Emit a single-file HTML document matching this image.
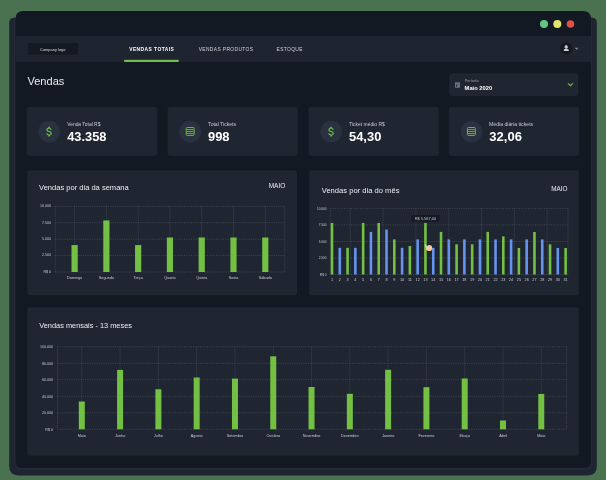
<!DOCTYPE html>
<html><head><meta charset="utf-8"><style>
html,body{margin:0;padding:0;width:606px;height:480px;overflow:hidden;background:#4a7250;}
svg{display:block;font-family:"Liberation Sans", sans-serif;will-change:transform;}
</style></head><body>
<svg width="606" height="480" viewBox="0 0 606 480">
<rect x="0.00" y="0.00" width="606.00" height="480.00" rx="0" fill="#4a7250" />
<path d="M14.5,17.8 H591.9 Q596.8,17.8 596.8,22.7 V466.5 Q596.8,475.4 587.9,475.4 H18.4 Q9.2,475.4 9.2,466.3 V23 Q9.2,17.8 14.5,17.8 Z" fill="#1e2430"/>
<path d="M14,17.8 H592.3 V462 Q592.3,470 584.3,470 H22 Q14,470 14,462 Z" fill="#232935"/>
<path d="M23.3,11 H583 Q591,11 591,19 V461 Q591,468 584,468 H22.5 Q15.5,468 15.5,461 V18.8 Q15.5,11 23.3,11 Z" fill="#121923"/>
<rect x="15.50" y="36.00" width="575.50" height="26.10" rx="0" fill="#1e2430" />
<circle cx="544.00" cy="24.00" r="4.00" fill="#5fc785"/>
<circle cx="557.30" cy="24.00" r="4.00" fill="#e6e36c"/>
<circle cx="570.50" cy="24.00" r="3.80" fill="#e05244"/>
<rect x="28.00" y="43.00" width="50.00" height="11.70" rx="0" fill="#141a24" />
<text x="40.10" y="50.50" font-size="4.2" fill="#dadde2" font-weight="400" textLength="25.27" lengthAdjust="spacingAndGlyphs" >Company logo</text>
<text x="129.18" y="51.00" font-size="4.9" fill="#ffffff" font-weight="700" textLength="44.69" lengthAdjust="spacing" >VENDAS TOTAIS</text>
<rect x="124.20" y="59.80" width="54.50" height="2.20" rx="0" fill="#6cc04a" />
<text x="198.68" y="51.10" font-size="4.9" fill="#d2d5da" font-weight="400" textLength="54.37" lengthAdjust="spacing" >VENDAS PRODUTOS</text>
<text x="276.51" y="51.10" font-size="4.9" fill="#d2d5da" font-weight="400" textLength="26.00" lengthAdjust="spacing" >ESTOQUE</text>
<circle cx="566.20" cy="48.40" r="6.00" fill="#131821"/>
<path d="M566.2,45 L567.7,45.9 V48 L566.9,48.8 H565.5 L564.7,48 V45.9 Z" fill="#c9ccd1"/>
<path d="M563.7,51 V49.7 L564.9,49 H567.5 L568.8,49.7 V51 Z" fill="#c9ccd1"/>
<path d="M574.8,47.8 L578.6,47.8 L576.7,50.1 Z" fill="#7d838c"/>
<text x="27.44" y="85.00" font-size="11.5" fill="#e9ebee" font-weight="400" textLength="36.96" lengthAdjust="spacingAndGlyphs" >Vendas</text>
<rect x="449.90" y="73.90" width="127.70" height="21.40" rx="1.5" fill="#1f2531" stroke="#262c38" stroke-width="0.8"/>
<rect x="455.00" y="82.60" width="5.00" height="5.15" rx="0.5" fill="#6d727c" />
<rect x="455.60" y="81.75" width="0.90" height="1.25" rx="0" fill="#6d727c" />
<rect x="458.50" y="81.75" width="0.90" height="1.25" rx="0" fill="#6d727c" />
<rect x="456.10" y="84.60" width="1.00" height="2.10" rx="0" fill="#1f2531" />
<rect x="457.60" y="83.90" width="1.60" height="0.50" rx="0" fill="#1f2531" />
<text x="464.68" y="81.80" font-size="3.6" fill="#9aa0a8" font-weight="400" textLength="13.99" lengthAdjust="spacingAndGlyphs" >Período</text>
<text x="464.63" y="89.90" font-size="5.4" fill="#ffffff" font-weight="700" textLength="27.51" lengthAdjust="spacingAndGlyphs" >Maio 2020</text>
<path d="M568.3,83.6 L570.4,85.7 L572.6,83.6" fill="none" stroke="#62b043" stroke-width="1.3" stroke-linecap="round" stroke-linejoin="round"/>
<rect x="27.00" y="107.30" width="130.00" height="48.20" rx="2" fill="#1f2531" stroke="#232a37" stroke-width="0.6"/>
<circle cx="49.20" cy="131.60" r="10.80" fill="#2a3242"/>
<path d="M11.8 10.9c-2.27-.59-3-1.2-3-2.150 0-1.09 1.01-1.85 2.7-1.85 1.78 0 2.44.85 2.5 2.1h2.21c-.07-1.72-1.12-3.3-3.21-3.81V3h-3v2.16c-1.94.42-3.5 1.68-3.5 3.61 0 2.31 1.91 3.46 4.7 4.13 2.5.6 3 1.48 3 2.410 0 .69-.49 1.79-2.7 1.79-2.06 0-2.870-.92-2.98-2.1h-2.2c.12 2.19 1.76 3.42 3.68 3.83V21h3v-2.15c1.95-.37 3.5-1.5 3.5-3.55 0-2.84-2.43-3.81-4.7-4.4z" fill="#6cc04a" transform="translate(42.81,125.06) scale(0.545)"/>
<text x="67.18" y="126.30" font-size="5.1" fill="#c9ccd2" font-weight="400" textLength="33.20" lengthAdjust="spacingAndGlyphs" >Venda Total R$</text>
<text x="67.21" y="140.90" font-size="12" fill="#ffffff" font-weight="700" textLength="39.26" lengthAdjust="spacingAndGlyphs" >43.358</text>
<rect x="168.00" y="107.30" width="129.30" height="48.20" rx="2" fill="#1f2531" stroke="#232a37" stroke-width="0.6"/>
<circle cx="190.20" cy="131.60" r="10.80" fill="#2a3242"/>
<rect x="186.25" y="127.50" width="7.90" height="7.90" rx="1.0" fill="#27332d" stroke="#6cc04a" stroke-width="0.95"/>
<rect x="186.90" y="129.18" width="6.60" height="0.84" rx="0" fill="#6cc04a" />
<rect x="186.90" y="131.08" width="6.60" height="0.84" rx="0" fill="#6cc04a" />
<rect x="186.90" y="132.98" width="6.60" height="0.84" rx="0" fill="#6cc04a" />
<text x="208.10" y="126.30" font-size="5.1" fill="#c9ccd2" font-weight="400" textLength="27.89" lengthAdjust="spacingAndGlyphs" >Total Tickets</text>
<text x="207.95" y="140.90" font-size="12" fill="#ffffff" font-weight="700" textLength="21.59" lengthAdjust="spacingAndGlyphs" >998</text>
<rect x="309.00" y="107.30" width="129.40" height="48.20" rx="2" fill="#1f2531" stroke="#232a37" stroke-width="0.6"/>
<circle cx="331.20" cy="131.60" r="10.80" fill="#2a3242"/>
<path d="M11.8 10.9c-2.27-.59-3-1.2-3-2.150 0-1.09 1.01-1.85 2.7-1.85 1.78 0 2.44.85 2.5 2.1h2.21c-.07-1.72-1.12-3.3-3.21-3.81V3h-3v2.16c-1.94.42-3.5 1.68-3.5 3.61 0 2.31 1.91 3.46 4.7 4.13 2.5.6 3 1.48 3 2.410 0 .69-.49 1.79-2.7 1.79-2.06 0-2.870-.92-2.98-2.1h-2.2c.12 2.19 1.76 3.42 3.68 3.83V21h3v-2.15c1.95-.37 3.5-1.5 3.5-3.55 0-2.84-2.43-3.81-4.7-4.4z" fill="#6cc04a" transform="translate(324.81,125.06) scale(0.545)"/>
<text x="349.10" y="126.30" font-size="5.1" fill="#c9ccd2" font-weight="400" textLength="35.69" lengthAdjust="spacingAndGlyphs" >Ticket médio R$</text>
<text x="349.01" y="140.90" font-size="12" fill="#ffffff" font-weight="700" textLength="32.34" lengthAdjust="spacingAndGlyphs" >54,30</text>
<rect x="449.20" y="107.30" width="129.60" height="48.20" rx="2" fill="#1f2531" stroke="#232a37" stroke-width="0.6"/>
<circle cx="471.40" cy="131.60" r="10.80" fill="#2a3242"/>
<rect x="467.45" y="127.50" width="7.90" height="7.90" rx="1.0" fill="#27332d" stroke="#6cc04a" stroke-width="0.95"/>
<rect x="468.10" y="129.18" width="6.60" height="0.84" rx="0" fill="#6cc04a" />
<rect x="468.10" y="131.08" width="6.60" height="0.84" rx="0" fill="#6cc04a" />
<rect x="468.10" y="132.98" width="6.60" height="0.84" rx="0" fill="#6cc04a" />
<text x="488.99" y="126.30" font-size="5.1" fill="#c9ccd2" font-weight="400" textLength="44.19" lengthAdjust="spacingAndGlyphs" >Média diária tickets</text>
<text x="489.27" y="140.90" font-size="12" fill="#ffffff" font-weight="700" textLength="32.61" lengthAdjust="spacingAndGlyphs" >32,06</text>
<rect x="27.50" y="170.30" width="269.50" height="124.90" rx="2.5" fill="#1f2531" />
<rect x="309.20" y="170.30" width="269.70" height="124.90" rx="2.5" fill="#1f2531" />
<rect x="27.30" y="307.30" width="551.60" height="148.40" rx="2.5" fill="#1f2531" />
<text x="39.06" y="189.90" font-size="7.8" fill="#eceef1" font-weight="400" textLength="89.66" lengthAdjust="spacingAndGlyphs" >Vendas por dia da semana</text>
<text x="268.68" y="187.90" font-size="6.8" fill="#eceef1" font-weight="400" textLength="16.62" lengthAdjust="spacingAndGlyphs" >MAIO</text>
<text x="321.76" y="192.70" font-size="7.8" fill="#eceef1" font-weight="400" textLength="77.70" lengthAdjust="spacingAndGlyphs" >Vendas por dia do mês</text>
<text x="551.29" y="190.60" font-size="6.8" fill="#eceef1" font-weight="400" textLength="16.30" lengthAdjust="spacingAndGlyphs" >MAIO</text>
<text x="39.26" y="327.70" font-size="7.8" fill="#eceef1" font-weight="400" textLength="92.71" lengthAdjust="spacingAndGlyphs" >Vendas mensais - 13 meses</text>
<line x1="55.2" y1="206.3" x2="284.8" y2="206.3" stroke="#4b525a" stroke-width="0.8" stroke-dasharray="1 1.3"/>
<line x1="55.2" y1="222.72500000000002" x2="284.8" y2="222.72500000000002" stroke="#4b525a" stroke-width="0.8" stroke-dasharray="1 1.3"/>
<line x1="55.2" y1="239.15" x2="284.8" y2="239.15" stroke="#4b525a" stroke-width="0.8" stroke-dasharray="1 1.3"/>
<line x1="55.2" y1="255.575" x2="284.8" y2="255.575" stroke="#4b525a" stroke-width="0.8" stroke-dasharray="1 1.3"/>
<line x1="55.2" y1="272.0" x2="284.8" y2="272.0" stroke="#4b525a" stroke-width="0.8" stroke-dasharray="1 1.3"/>
<line x1="55.2" y1="206.3" x2="55.2" y2="272.0" stroke="#4b525a" stroke-width="0.8" stroke-dasharray="1 1.3"/>
<line x1="74.6" y1="206.3" x2="74.6" y2="272.0" stroke="#4b525a" stroke-width="0.8" stroke-dasharray="1 1.3"/>
<line x1="106.38" y1="206.3" x2="106.38" y2="272.0" stroke="#4b525a" stroke-width="0.8" stroke-dasharray="1 1.3"/>
<line x1="138.16" y1="206.3" x2="138.16" y2="272.0" stroke="#4b525a" stroke-width="0.8" stroke-dasharray="1 1.3"/>
<line x1="169.94" y1="206.3" x2="169.94" y2="272.0" stroke="#4b525a" stroke-width="0.8" stroke-dasharray="1 1.3"/>
<line x1="201.72" y1="206.3" x2="201.72" y2="272.0" stroke="#4b525a" stroke-width="0.8" stroke-dasharray="1 1.3"/>
<line x1="233.5" y1="206.3" x2="233.5" y2="272.0" stroke="#4b525a" stroke-width="0.8" stroke-dasharray="1 1.3"/>
<line x1="265.28" y1="206.3" x2="265.28" y2="272.0" stroke="#4b525a" stroke-width="0.8" stroke-dasharray="1 1.3"/>
<line x1="284.8" y1="206.3" x2="284.8" y2="272.0" stroke="#4b525a" stroke-width="0.8" stroke-dasharray="1 1.3"/>
<text x="51.00" y="207.10" font-size="3.6" fill="#c9ccd2" font-weight="400" text-anchor="end" letter-spacing="0" >10.000</text>
<text x="51.00" y="223.53" font-size="3.6" fill="#c9ccd2" font-weight="400" text-anchor="end" letter-spacing="0" >7.500</text>
<text x="51.00" y="239.95" font-size="3.6" fill="#c9ccd2" font-weight="400" text-anchor="end" letter-spacing="0" >5.000</text>
<text x="51.00" y="256.38" font-size="3.6" fill="#c9ccd2" font-weight="400" text-anchor="end" letter-spacing="0" >2.500</text>
<text x="51.00" y="272.80" font-size="3.6" fill="#c9ccd2" font-weight="400" text-anchor="end" letter-spacing="0" >R$ 0</text>
<rect x="71.50" y="245.06" width="6.20" height="26.94" rx="0" fill="#74c043" />
<text x="74.60" y="278.90" font-size="3.8" fill="#c9ccd2" font-weight="400" text-anchor="middle" letter-spacing="0" >Domingo</text>
<rect x="103.28" y="220.43" width="6.20" height="51.57" rx="0" fill="#74c043" />
<text x="106.38" y="278.90" font-size="3.8" fill="#c9ccd2" font-weight="400" text-anchor="middle" letter-spacing="0" >Segunda</text>
<rect x="135.06" y="245.06" width="6.20" height="26.94" rx="0" fill="#74c043" />
<text x="138.16" y="278.90" font-size="3.8" fill="#c9ccd2" font-weight="400" text-anchor="middle" letter-spacing="0" >Terça</text>
<rect x="166.84" y="237.51" width="6.20" height="34.49" rx="0" fill="#74c043" />
<text x="169.94" y="278.90" font-size="3.8" fill="#c9ccd2" font-weight="400" text-anchor="middle" letter-spacing="0" >Quarta</text>
<rect x="198.62" y="237.51" width="6.20" height="34.49" rx="0" fill="#74c043" />
<text x="201.72" y="278.90" font-size="3.8" fill="#c9ccd2" font-weight="400" text-anchor="middle" letter-spacing="0" >Quinta</text>
<rect x="230.40" y="237.51" width="6.20" height="34.49" rx="0" fill="#74c043" />
<text x="233.50" y="278.90" font-size="3.8" fill="#c9ccd2" font-weight="400" text-anchor="middle" letter-spacing="0" >Sexta</text>
<rect x="262.18" y="237.51" width="6.20" height="34.49" rx="0" fill="#74c043" />
<text x="265.28" y="278.90" font-size="3.8" fill="#c9ccd2" font-weight="400" text-anchor="middle" letter-spacing="0" >Sábado</text>
<line x1="330.3" y1="208.4" x2="568" y2="208.4" stroke="#4b525a" stroke-width="0.8" stroke-dasharray="1 1.3"/>
<line x1="330.3" y1="224.925" x2="568" y2="224.925" stroke="#4b525a" stroke-width="0.8" stroke-dasharray="1 1.3"/>
<line x1="330.3" y1="241.45" x2="568" y2="241.45" stroke="#4b525a" stroke-width="0.8" stroke-dasharray="1 1.3"/>
<line x1="330.3" y1="257.975" x2="568" y2="257.975" stroke="#4b525a" stroke-width="0.8" stroke-dasharray="1 1.3"/>
<line x1="330.3" y1="274.5" x2="568" y2="274.5" stroke="#4b525a" stroke-width="0.8" stroke-dasharray="1 1.3"/>
<line x1="330.3" y1="208.4" x2="330.3" y2="274.5" stroke="#4b525a" stroke-width="0.8" stroke-dasharray="1 1.3"/>
<line x1="350.3" y1="208.4" x2="350.3" y2="274.5" stroke="#4b525a" stroke-width="0.8" stroke-dasharray="1 1.3"/>
<line x1="383.1" y1="208.4" x2="383.1" y2="274.5" stroke="#4b525a" stroke-width="0.8" stroke-dasharray="1 1.3"/>
<line x1="415.9" y1="208.4" x2="415.9" y2="274.5" stroke="#4b525a" stroke-width="0.8" stroke-dasharray="1 1.3"/>
<line x1="448.7" y1="208.4" x2="448.7" y2="274.5" stroke="#4b525a" stroke-width="0.8" stroke-dasharray="1 1.3"/>
<line x1="481.5" y1="208.4" x2="481.5" y2="274.5" stroke="#4b525a" stroke-width="0.8" stroke-dasharray="1 1.3"/>
<line x1="514.3" y1="208.4" x2="514.3" y2="274.5" stroke="#4b525a" stroke-width="0.8" stroke-dasharray="1 1.3"/>
<line x1="547.1" y1="208.4" x2="547.1" y2="274.5" stroke="#4b525a" stroke-width="0.8" stroke-dasharray="1 1.3"/>
<line x1="568" y1="208.4" x2="568" y2="274.5" stroke="#4b525a" stroke-width="0.8" stroke-dasharray="1 1.3"/>
<text x="326.50" y="209.50" font-size="3.15" fill="#c9ccd2" font-weight="400" text-anchor="end" letter-spacing="0" >10.000</text>
<text x="326.50" y="226.03" font-size="3.15" fill="#c9ccd2" font-weight="400" text-anchor="end" letter-spacing="0" >7.500</text>
<text x="326.50" y="242.55" font-size="3.15" fill="#c9ccd2" font-weight="400" text-anchor="end" letter-spacing="0" >5.000</text>
<text x="326.50" y="259.08" font-size="3.15" fill="#c9ccd2" font-weight="400" text-anchor="end" letter-spacing="0" >2.500</text>
<text x="326.50" y="275.60" font-size="3.15" fill="#c9ccd2" font-weight="400" text-anchor="end" letter-spacing="0" >R$ 0</text>
<rect x="330.70" y="223.00" width="2.60" height="51.50" rx="0" fill="#74c043" />
<text x="332.00" y="281.20" font-size="3.8" fill="#c9ccd2" font-weight="400" text-anchor="middle" letter-spacing="0" >1</text>
<rect x="338.49" y="247.80" width="2.60" height="26.70" rx="0" fill="#6593ee" />
<text x="339.79" y="281.20" font-size="3.8" fill="#c9ccd2" font-weight="400" text-anchor="middle" letter-spacing="0" >2</text>
<rect x="346.27" y="247.80" width="2.60" height="26.70" rx="0" fill="#74c043" />
<text x="347.57" y="281.20" font-size="3.8" fill="#c9ccd2" font-weight="400" text-anchor="middle" letter-spacing="0" >3</text>
<rect x="354.06" y="247.80" width="2.60" height="26.70" rx="0" fill="#6593ee" />
<text x="355.36" y="281.20" font-size="3.8" fill="#c9ccd2" font-weight="400" text-anchor="middle" letter-spacing="0" >4</text>
<rect x="361.85" y="223.00" width="2.60" height="51.50" rx="0" fill="#74c043" />
<text x="363.15" y="281.20" font-size="3.8" fill="#c9ccd2" font-weight="400" text-anchor="middle" letter-spacing="0" >5</text>
<rect x="369.63" y="231.90" width="2.60" height="42.60" rx="0" fill="#6593ee" />
<text x="370.94" y="281.20" font-size="3.8" fill="#c9ccd2" font-weight="400" text-anchor="middle" letter-spacing="0" >6</text>
<rect x="377.42" y="223.00" width="2.60" height="51.50" rx="0" fill="#74c043" />
<text x="378.72" y="281.20" font-size="3.8" fill="#c9ccd2" font-weight="400" text-anchor="middle" letter-spacing="0" >7</text>
<rect x="385.21" y="229.50" width="2.60" height="45.00" rx="0" fill="#6593ee" />
<text x="386.51" y="281.20" font-size="3.8" fill="#c9ccd2" font-weight="400" text-anchor="middle" letter-spacing="0" >8</text>
<rect x="393.00" y="239.40" width="2.60" height="35.10" rx="0" fill="#74c043" />
<text x="394.30" y="281.20" font-size="3.8" fill="#c9ccd2" font-weight="400" text-anchor="middle" letter-spacing="0" >9</text>
<rect x="400.78" y="247.80" width="2.60" height="26.70" rx="0" fill="#6593ee" />
<text x="402.08" y="281.20" font-size="3.8" fill="#c9ccd2" font-weight="400" text-anchor="middle" letter-spacing="0" >10</text>
<rect x="408.57" y="246.00" width="2.60" height="28.50" rx="0" fill="#74c043" />
<text x="409.87" y="281.20" font-size="3.8" fill="#c9ccd2" font-weight="400" text-anchor="middle" letter-spacing="0" >11</text>
<rect x="416.36" y="239.40" width="2.60" height="35.10" rx="0" fill="#6593ee" />
<text x="417.66" y="281.20" font-size="3.8" fill="#c9ccd2" font-weight="400" text-anchor="middle" letter-spacing="0" >12</text>
<rect x="424.14" y="223.00" width="2.60" height="51.50" rx="0" fill="#74c043" />
<text x="425.44" y="281.20" font-size="3.8" fill="#c9ccd2" font-weight="400" text-anchor="middle" letter-spacing="0" >13</text>
<rect x="431.93" y="247.80" width="2.60" height="26.70" rx="0" fill="#6593ee" />
<text x="433.23" y="281.20" font-size="3.8" fill="#c9ccd2" font-weight="400" text-anchor="middle" letter-spacing="0" >14</text>
<rect x="439.72" y="231.90" width="2.60" height="42.60" rx="0" fill="#74c043" />
<text x="441.02" y="281.20" font-size="3.8" fill="#c9ccd2" font-weight="400" text-anchor="middle" letter-spacing="0" >15</text>
<rect x="447.50" y="239.40" width="2.60" height="35.10" rx="0" fill="#6593ee" />
<text x="448.81" y="281.20" font-size="3.8" fill="#c9ccd2" font-weight="400" text-anchor="middle" letter-spacing="0" >16</text>
<rect x="455.29" y="244.30" width="2.60" height="30.20" rx="0" fill="#74c043" />
<text x="456.59" y="281.20" font-size="3.8" fill="#c9ccd2" font-weight="400" text-anchor="middle" letter-spacing="0" >17</text>
<rect x="463.08" y="239.40" width="2.60" height="35.10" rx="0" fill="#6593ee" />
<text x="464.38" y="281.20" font-size="3.8" fill="#c9ccd2" font-weight="400" text-anchor="middle" letter-spacing="0" >18</text>
<rect x="470.87" y="244.30" width="2.60" height="30.20" rx="0" fill="#74c043" />
<text x="472.17" y="281.20" font-size="3.8" fill="#c9ccd2" font-weight="400" text-anchor="middle" letter-spacing="0" >19</text>
<rect x="478.65" y="239.40" width="2.60" height="35.10" rx="0" fill="#6593ee" />
<text x="479.95" y="281.20" font-size="3.8" fill="#c9ccd2" font-weight="400" text-anchor="middle" letter-spacing="0" >20</text>
<rect x="486.44" y="231.90" width="2.60" height="42.60" rx="0" fill="#74c043" />
<text x="487.74" y="281.20" font-size="3.8" fill="#c9ccd2" font-weight="400" text-anchor="middle" letter-spacing="0" >21</text>
<rect x="494.23" y="239.40" width="2.60" height="35.10" rx="0" fill="#6593ee" />
<text x="495.53" y="281.20" font-size="3.8" fill="#c9ccd2" font-weight="400" text-anchor="middle" letter-spacing="0" >22</text>
<rect x="502.01" y="236.40" width="2.60" height="38.10" rx="0" fill="#74c043" />
<text x="503.31" y="281.20" font-size="3.8" fill="#c9ccd2" font-weight="400" text-anchor="middle" letter-spacing="0" >23</text>
<rect x="509.80" y="239.40" width="2.60" height="35.10" rx="0" fill="#6593ee" />
<text x="511.10" y="281.20" font-size="3.8" fill="#c9ccd2" font-weight="400" text-anchor="middle" letter-spacing="0" >24</text>
<rect x="517.59" y="248.00" width="2.60" height="26.50" rx="0" fill="#74c043" />
<text x="518.89" y="281.20" font-size="3.8" fill="#c9ccd2" font-weight="400" text-anchor="middle" letter-spacing="0" >25</text>
<rect x="525.38" y="239.40" width="2.60" height="35.10" rx="0" fill="#6593ee" />
<text x="526.67" y="281.20" font-size="3.8" fill="#c9ccd2" font-weight="400" text-anchor="middle" letter-spacing="0" >26</text>
<rect x="533.16" y="232.00" width="2.60" height="42.50" rx="0" fill="#74c043" />
<text x="534.46" y="281.20" font-size="3.8" fill="#c9ccd2" font-weight="400" text-anchor="middle" letter-spacing="0" >27</text>
<rect x="540.95" y="239.40" width="2.60" height="35.10" rx="0" fill="#6593ee" />
<text x="542.25" y="281.20" font-size="3.8" fill="#c9ccd2" font-weight="400" text-anchor="middle" letter-spacing="0" >28</text>
<rect x="548.74" y="244.30" width="2.60" height="30.20" rx="0" fill="#74c043" />
<text x="550.04" y="281.20" font-size="3.8" fill="#c9ccd2" font-weight="400" text-anchor="middle" letter-spacing="0" >29</text>
<rect x="556.52" y="248.00" width="2.60" height="26.50" rx="0" fill="#6593ee" />
<text x="557.82" y="281.20" font-size="3.8" fill="#c9ccd2" font-weight="400" text-anchor="middle" letter-spacing="0" >30</text>
<rect x="564.31" y="248.00" width="2.60" height="26.50" rx="0" fill="#74c043" />
<text x="565.61" y="281.20" font-size="3.8" fill="#c9ccd2" font-weight="400" text-anchor="middle" letter-spacing="0" >31</text>
<rect x="411.50" y="215.00" width="28.00" height="6.60" rx="0.8" fill="#141922" />
<text x="414.69" y="220.10" font-size="3.8" fill="#c9ccd2" font-weight="400" textLength="21.45" lengthAdjust="spacingAndGlyphs" >R$ 5.567,00</text>
<path d="M425.2,244.3 L427.6,247 L426.2,249.2 Z" fill="#b9bdc6"/>
<path d="M426.2,247.2 Q427.5,244.8 430,245.1 Q432.4,245.6 432.2,248.2 Q431.8,251.2 428.9,251.1 Q426.4,250.9 425.9,249 Z" fill="#f6cb9c"/>
<path d="M425.3,244.2 L426.1,247.6" stroke="#d0d3d8" stroke-width="0.9"/>
<line x1="57.5" y1="346.8" x2="566.6" y2="346.8" stroke="#4b525a" stroke-width="0.8" stroke-dasharray="1 1.3"/>
<line x1="57.5" y1="363.3" x2="566.6" y2="363.3" stroke="#4b525a" stroke-width="0.8" stroke-dasharray="1 1.3"/>
<line x1="57.5" y1="379.8" x2="566.6" y2="379.8" stroke="#4b525a" stroke-width="0.8" stroke-dasharray="1 1.3"/>
<line x1="57.5" y1="396.3" x2="566.6" y2="396.3" stroke="#4b525a" stroke-width="0.8" stroke-dasharray="1 1.3"/>
<line x1="57.5" y1="412.8" x2="566.6" y2="412.8" stroke="#4b525a" stroke-width="0.8" stroke-dasharray="1 1.3"/>
<line x1="57.5" y1="429.3" x2="566.6" y2="429.3" stroke="#4b525a" stroke-width="0.8" stroke-dasharray="1 1.3"/>
<line x1="57.5" y1="346.8" x2="57.5" y2="429.3" stroke="#4b525a" stroke-width="0.8" stroke-dasharray="1 1.3"/>
<line x1="81.8" y1="346.8" x2="81.8" y2="429.3" stroke="#4b525a" stroke-width="0.8" stroke-dasharray="1 1.3"/>
<line x1="120.09" y1="346.8" x2="120.09" y2="429.3" stroke="#4b525a" stroke-width="0.8" stroke-dasharray="1 1.3"/>
<line x1="158.38" y1="346.8" x2="158.38" y2="429.3" stroke="#4b525a" stroke-width="0.8" stroke-dasharray="1 1.3"/>
<line x1="196.67000000000002" y1="346.8" x2="196.67000000000002" y2="429.3" stroke="#4b525a" stroke-width="0.8" stroke-dasharray="1 1.3"/>
<line x1="234.95999999999998" y1="346.8" x2="234.95999999999998" y2="429.3" stroke="#4b525a" stroke-width="0.8" stroke-dasharray="1 1.3"/>
<line x1="273.25" y1="346.8" x2="273.25" y2="429.3" stroke="#4b525a" stroke-width="0.8" stroke-dasharray="1 1.3"/>
<line x1="311.54" y1="346.8" x2="311.54" y2="429.3" stroke="#4b525a" stroke-width="0.8" stroke-dasharray="1 1.3"/>
<line x1="349.83" y1="346.8" x2="349.83" y2="429.3" stroke="#4b525a" stroke-width="0.8" stroke-dasharray="1 1.3"/>
<line x1="388.12" y1="346.8" x2="388.12" y2="429.3" stroke="#4b525a" stroke-width="0.8" stroke-dasharray="1 1.3"/>
<line x1="426.41" y1="346.8" x2="426.41" y2="429.3" stroke="#4b525a" stroke-width="0.8" stroke-dasharray="1 1.3"/>
<line x1="464.7" y1="346.8" x2="464.7" y2="429.3" stroke="#4b525a" stroke-width="0.8" stroke-dasharray="1 1.3"/>
<line x1="502.99" y1="346.8" x2="502.99" y2="429.3" stroke="#4b525a" stroke-width="0.8" stroke-dasharray="1 1.3"/>
<line x1="541.28" y1="346.8" x2="541.28" y2="429.3" stroke="#4b525a" stroke-width="0.8" stroke-dasharray="1 1.3"/>
<line x1="566.6" y1="346.8" x2="566.6" y2="429.3" stroke="#4b525a" stroke-width="0.8" stroke-dasharray="1 1.3"/>
<text x="52.90" y="348.00" font-size="3.6" fill="#c9ccd2" font-weight="400" text-anchor="end" letter-spacing="0" >100.000</text>
<text x="52.90" y="364.50" font-size="3.6" fill="#c9ccd2" font-weight="400" text-anchor="end" letter-spacing="0" >80.000</text>
<text x="52.90" y="381.00" font-size="3.6" fill="#c9ccd2" font-weight="400" text-anchor="end" letter-spacing="0" >60.000</text>
<text x="52.90" y="397.50" font-size="3.6" fill="#c9ccd2" font-weight="400" text-anchor="end" letter-spacing="0" >40.000</text>
<text x="52.90" y="414.00" font-size="3.6" fill="#c9ccd2" font-weight="400" text-anchor="end" letter-spacing="0" >20.000</text>
<text x="52.90" y="430.50" font-size="3.6" fill="#c9ccd2" font-weight="400" text-anchor="end" letter-spacing="0" >R$ 0</text>
<rect x="78.80" y="401.50" width="6.00" height="27.80" rx="0" fill="#74c043" />
<text x="81.80" y="436.80" font-size="3.8" fill="#c9ccd2" font-weight="400" text-anchor="middle" letter-spacing="0" >Maio</text>
<rect x="117.09" y="369.90" width="6.00" height="59.40" rx="0" fill="#74c043" />
<text x="120.09" y="436.80" font-size="3.8" fill="#c9ccd2" font-weight="400" text-anchor="middle" letter-spacing="0" >Junho</text>
<rect x="155.38" y="389.30" width="6.00" height="40.00" rx="0" fill="#74c043" />
<text x="158.38" y="436.80" font-size="3.8" fill="#c9ccd2" font-weight="400" text-anchor="middle" letter-spacing="0" >Julho</text>
<rect x="193.67" y="377.50" width="6.00" height="51.80" rx="0" fill="#74c043" />
<text x="196.67" y="436.80" font-size="3.8" fill="#c9ccd2" font-weight="400" text-anchor="middle" letter-spacing="0" >Agosto</text>
<rect x="231.96" y="378.60" width="6.00" height="50.70" rx="0" fill="#74c043" />
<text x="234.96" y="436.80" font-size="3.8" fill="#c9ccd2" font-weight="400" text-anchor="middle" letter-spacing="0" >Setembro</text>
<rect x="270.25" y="356.30" width="6.00" height="73.00" rx="0" fill="#74c043" />
<text x="273.25" y="436.80" font-size="3.8" fill="#c9ccd2" font-weight="400" text-anchor="middle" letter-spacing="0" >Outubro</text>
<rect x="308.54" y="387.00" width="6.00" height="42.30" rx="0" fill="#74c043" />
<text x="311.54" y="436.80" font-size="3.8" fill="#c9ccd2" font-weight="400" text-anchor="middle" letter-spacing="0" >Novembro</text>
<rect x="346.83" y="393.80" width="6.00" height="35.50" rx="0" fill="#74c043" />
<text x="349.83" y="436.80" font-size="3.8" fill="#c9ccd2" font-weight="400" text-anchor="middle" letter-spacing="0" >Dezembro</text>
<rect x="385.12" y="369.80" width="6.00" height="59.50" rx="0" fill="#74c043" />
<text x="388.12" y="436.80" font-size="3.8" fill="#c9ccd2" font-weight="400" text-anchor="middle" letter-spacing="0" >Janeiro</text>
<rect x="423.41" y="387.20" width="6.00" height="42.10" rx="0" fill="#74c043" />
<text x="426.41" y="436.80" font-size="3.8" fill="#c9ccd2" font-weight="400" text-anchor="middle" letter-spacing="0" >Fevereiro</text>
<rect x="461.70" y="378.50" width="6.00" height="50.80" rx="0" fill="#74c043" />
<text x="464.70" y="436.80" font-size="3.8" fill="#c9ccd2" font-weight="400" text-anchor="middle" letter-spacing="0" >Março</text>
<rect x="499.99" y="420.50" width="6.00" height="8.80" rx="0" fill="#74c043" />
<text x="502.99" y="436.80" font-size="3.8" fill="#c9ccd2" font-weight="400" text-anchor="middle" letter-spacing="0" >Abril</text>
<rect x="538.28" y="394.00" width="6.00" height="35.30" rx="0" fill="#74c043" />
<text x="541.28" y="436.80" font-size="3.8" fill="#c9ccd2" font-weight="400" text-anchor="middle" letter-spacing="0" >Maio</text>
</svg>
</body></html>
